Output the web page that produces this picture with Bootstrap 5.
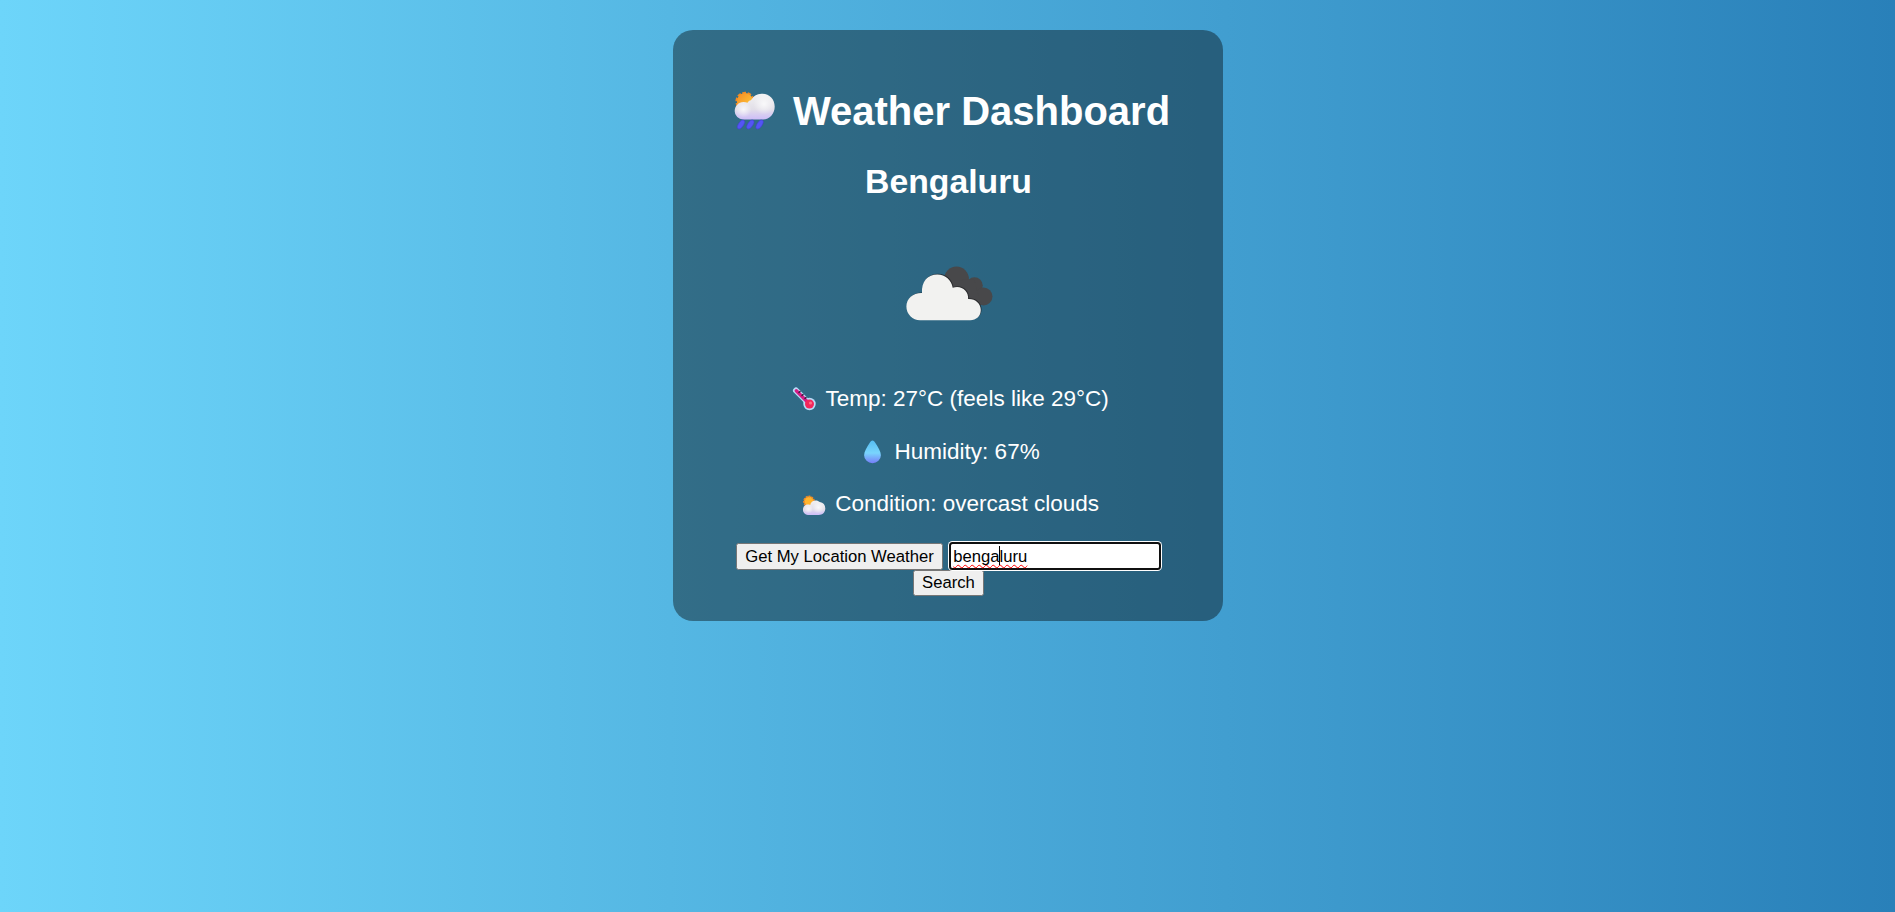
<!DOCTYPE html>
<html lang="en">
<head>
<meta charset="utf-8">
<meta name="viewport" content="width=device-width, initial-scale=1">
<title>Weather Dashboard</title>
<link href="https://cdn.jsdelivr.net/npm/bootstrap@5.3.0/dist/css/bootstrap.min.css" rel="stylesheet">
<style>
body{font-family:"Liberation Sans",Arial,sans-serif;background:linear-gradient(to right,#6dd5fa,#2980b9);color:#fff;padding-top:30px}
.weather-panel{width:550px;height:591px;border-radius:20px;background:rgba(0,0,0,.4);padding:51px 0 0 2px}
.weather-panel h1{font-size:40px;line-height:60px;font-weight:700;height:60px}
.weather-panel h1 svg{margin-top:1px}
.weather-panel h2{font-size:33.75px;line-height:50px;font-weight:700;height:50px;margin-top:15px}
.sky{width:125px;height:125px;margin:25px auto 17px}
.reading{font-size:22.5px;line-height:52.7px;height:52.7px}
.reading svg{width:31px;height:52px}
.native-btn{font-size:16.667px;line-height:19px;color:#000;background:#efefef;border:1px solid #767676;border-radius:2.5px;padding:0}
.locate{width:207.5px;height:27px}
.search{width:71px;height:26px;padding-bottom:2px}
.controls{margin-top:11px;gap:6px;height:28px}
.city-box{width:212px;height:28px;border:2px solid #101010;border-radius:3.5px;box-shadow:0 0 0 1px #fff;background:#fff;color:#000;font-size:16.667px;line-height:25px;padding-left:2px}
.city-box .typed{text-decoration:underline wavy #f00 1px;text-underline-offset:2px;text-decoration-skip-ink:none}
.caret{left:48px;top:2px;width:1px;height:19px;background:#000}
</style>
</head>
<body class="min-vh-100">
<main class="weather-panel mx-auto text-center">
<h1 class="d-flex justify-content-center mb-0">
<svg width="55" height="60" viewBox="0 0 55 60" aria-hidden="true">
<defs>
<linearGradient id="puff" x2="0" y2="1"><stop offset="0" stop-color="#f2f2f2"/><stop offset=".6" stop-color="#e2dfe8"/><stop offset="1" stop-color="#cdbcf8"/></linearGradient>
<linearGradient id="sun" x2="1" y2="1"><stop offset="0" stop-color="#f58a24"/><stop offset="1" stop-color="#ffd23c"/></linearGradient>
<radialGradient id="glow"><stop offset="0" stop-color="#fff" stop-opacity=".75"/><stop offset="1" stop-color="#fff" stop-opacity="0"/></radialGradient>
</defs>
<circle cx="18" cy="19.300" r="8" fill="url(#sun)" stroke="#f28a25" stroke-width="3.200" stroke-dasharray="3.400 1.600" stroke-linejoin="round"/>
<circle cx="18" cy="19.300" r="8" fill="url(#sun)"/>
<path d="M16.500 37.500a8.400 8.400 0 0 1-8.800-8.600c0-5 3.800-9 8.800-9 1.500 0 2.800.2 4 .8 1-1.600 1.800-2.200 3.400-2.400A12.200 12.200 0 0 1 35.500 11.700c7 0 12.200 5.500 12.200 12.800S42.700 37.500 36 37.500z" fill="url(#puff)"/>
<circle cx="16.500" cy="27.500" r="8" fill="url(#glow)"/>
<circle cx="37" cy="22" r="10.500" fill="url(#glow)"/>
<g fill="#5455f5" stroke="#443cd4" stroke-width=".5"><ellipse cx="14" cy="42.500" rx="2.500" ry="5.200" transform="rotate(34 14 42.500)"/><ellipse cx="23.300" cy="42.500" rx="2.500" ry="5.200" transform="rotate(34 23.300 42.500)"/><ellipse cx="32.600" cy="42.500" rx="2.500" ry="5.200" transform="rotate(34 32.600 42.500)"/></g>
</svg><span>&nbsp;Weather Dashboard</span></h1>
<h2 class="mb-0">Bengaluru</h2>
<svg class="sky d-block" viewBox="0 0 125 125" role="img" aria-label="overcast clouds">
<g fill="#48484a"><circle cx="70.5" cy="48" r="12.400"/><circle cx="88.500" cy="54.500" r="8.300"/><circle cx="97.500" cy="65.500" r="9"/><path d="M65 50L88 48l7 26L75 73z"/></g>
<path d="M34 89.200a13.600 13.600 0 0 1-13.600-13.600C20.400 67.500 27.500 61.700 36 62.100 35.200 50 42 43.400 51.300 43.400c8 0 14.200 5.500 15.400 13.300 8-3 16.200 2.600 15.400 11.200 7.200-.4 12.700 4.600 12.700 11 0 6-4.600 10.300-10.500 10.300z" fill="#222326" opacity=".75" transform="translate(.8 -.6)"/>
<path d="M34 89.200a13.600 13.600 0 0 1-13.600-13.600C20.400 67.500 27.500 61.700 36 62.100 35.200 50 42 43.400 51.300 43.400c8 0 14.200 5.500 15.400 13.300 8-3 16.200 2.600 15.400 11.200 7.200-.4 12.700 4.600 12.700 11 0 6-4.600 10.300-10.500 10.300z" fill="#f2f2f0"/>
</svg>
<p class="reading d-flex justify-content-center mb-0">
<svg viewBox="0 0 31 52" aria-hidden="true"><g stroke-linecap="round"><path d="M8 17.500L21.500 31" stroke="#b9dcf8" stroke-width="6"/><circle cx="21.500" cy="31" r="6.200" fill="#b9dcf8"/><path d="M8.300 17.800L20 29.500" stroke="#d61c85" stroke-width="3.400"/><path d="M12 18.500l-1 1M15 21.500l-1 1M18 24.500l-1 1" stroke="#37213f" stroke-width="1.500"/></g><circle cx="21.500" cy="31" r="4.500" fill="#f5265b"/><circle cx="22.500" cy="30" r="1.600" fill="#ff6d86"/></svg><span>&nbsp;Temp: 27°C (feels like 29°C)</span></p>
<p class="reading d-flex justify-content-center mb-0">
<svg viewBox="0 0 31 52" aria-hidden="true"><defs><linearGradient id="drop" x2="0" y2="1"><stop offset="0" stop-color="#55bdf2"/><stop offset=".55" stop-color="#79d5fd"/><stop offset="1" stop-color="#767df8"/></linearGradient></defs><path d="M15.500 14.500c1.200 0 2 1 2.900 2.400 2.500 4 5.500 8.300 5.500 12.300a8.400 8 0 0 1-16.800 0c0-4 3-8.300 5.500-12.300.9-1.400 1.700-2.400 2.900-2.400z" fill="url(#drop)"/></svg><span>&nbsp;Humidity: 67%</span></p>
<p class="reading d-flex justify-content-center mb-0">
<svg viewBox="0 0 31 52" aria-hidden="true"><circle cx="11" cy="23.500" r="5" fill="#ffb52c" stroke="#f28a25" stroke-width="1.800" stroke-dasharray="2 .8"/><path d="M10 37a5 5 0 0 1-5-5.500c0-3 2.300-5 5-5 .8 0 1.500.1 2.200.5.300-2.700 2.600-4.600 5.500-4.600 1.800 0 3 .6 4 1.600a6.700 6.700 0 0 1 5.600 6.500c0 3.700-2.800 6.500-6.500 6.500z" fill="url(#puff)"/><circle cx="20.500" cy="29.500" r="6" fill="url(#glow)"/><circle cx="10.500" cy="31" r="4.500" fill="url(#glow)"/></svg><span>&nbsp;Condition: overcast clouds</span></p>
<div class="controls d-flex justify-content-center align-items-center">
<button type="button" class="native-btn locate">Get My Location Weather</button>
<div class="city-box position-relative text-start" role="textbox"><span class="typed">bengaluru</span><span class="caret position-absolute"></span></div>
</div>
<button type="button" class="native-btn search d-block mx-auto">Search</button>
</main>
<script src="https://cdn.jsdelivr.net/npm/bootstrap@5.3.0/dist/js/bootstrap.bundle.min.js"></script>
</body>
</html>
